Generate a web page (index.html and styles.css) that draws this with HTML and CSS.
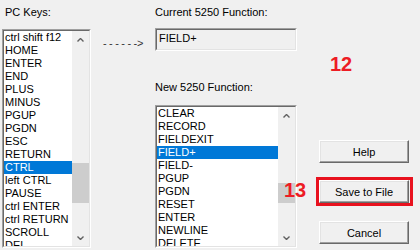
FILE: index.html
```html
<!DOCTYPE html>
<html lang="en">
<head>
    <meta charset="UTF-8">
    <meta name="viewport" content="width=device-width, initial-scale=1.0">
    <title>Keyboard Mapping</title>
    <link rel="stylesheet" href="styles.css">
</head>
<body>
    <div class="dialog">
        <div class="keys">
            <div class="label">PC Keys:</div>
            <div class="listbox keys-list">
                <div class="listbox-inner">
                    <ul class="items">
                        <li>ctrl shift f12</li>
                        <li>HOME</li>
                        <li>ENTER</li>
                        <li>END</li>
                        <li>PLUS</li>
                        <li>MINUS</li>
                        <li>PGUP</li>
                        <li>PGDN</li>
                        <li>ESC</li>
                        <li>RETURN</li>
                        <li class="selected">CTRL</li>
                        <li>left CTRL</li>
                        <li>PAUSE</li>
                        <li>ctrl ENTER</li>
                        <li>ctrl RETURN</li>
                        <li>SCROLL</li>
                        <li>DEL</li>
                    </ul>
                    <div class="scrollbar">
                        <div class="scroll-btn"><svg width="7" height="4" viewBox="0 0 7 4"><polyline points="0.5,3.5 3.5,0.5 6.5,3.5" fill="none" stroke="#606060" stroke-width="1.4"/></svg></div>
                        <div class="track"><div class="thumb keys-thumb"></div></div>
                        <div class="scroll-btn"><svg width="7" height="4" viewBox="0 0 7 4"><polyline points="0.5,0.5 3.5,3.5 6.5,0.5" fill="none" stroke="#606060" stroke-width="1.4"/></svg></div>
                    </div>
                </div>
            </div>
        </div>

        <div class="arrow">- - - - - -&gt;</div>

        <div class="functions">
            <div class="label">Current 5250 Function:</div>
            <div class="textbox">
                <div class="textbox-inner">FIELD+</div>
            </div>
            <div class="label new-label">New 5250 Function:</div>
            <div class="listbox fn-list">
                <div class="listbox-inner">
                    <ul class="items">
                        <li>CLEAR</li>
                        <li>RECORD</li>
                        <li>FIELDEXIT</li>
                        <li class="selected">FIELD+</li>
                        <li>FIELD-</li>
                        <li>PGUP</li>
                        <li>PGDN</li>
                        <li>RESET</li>
                        <li>ENTER</li>
                        <li>NEWLINE</li>
                        <li>DELETE</li>
                    </ul>
                    <div class="scrollbar">
                        <div class="scroll-btn"><svg width="7" height="4" viewBox="0 0 7 4"><polyline points="0.5,3.5 3.5,0.5 6.5,3.5" fill="none" stroke="#606060" stroke-width="1.4"/></svg></div>
                        <div class="track"><div class="thumb fn-thumb"></div></div>
                        <div class="scroll-btn"><svg width="7" height="4" viewBox="0 0 7 4"><polyline points="0.5,0.5 3.5,3.5 6.5,0.5" fill="none" stroke="#606060" stroke-width="1.4"/></svg></div>
                    </div>
                </div>
            </div>
        </div>

        <div class="buttons">
            <button class="btn help">Help</button>
            <div class="marked">
                <button class="btn">Save to File</button>
            </div>
            <button class="btn cancel">Cancel</button>
        </div>

        <span class="callout callout-12">12</span>
        <span class="callout callout-13">13</span>
    </div>
</body>
</html>
```

FILE: styles.css
```css
html, body {
    height: 250px;
    overflow: hidden;
}
body {
    margin: 0;
    background-color: #f0f0f0;
    font-family: "Liberation Sans", Arial, sans-serif;
    font-size: 11px;
    line-height: 13px;
    color: #000;
}
.dialog {
    position: relative;
    display: flex;
    height: 250px;
}
.label {
    height: 13px;
    margin-top: 6px;
    white-space: nowrap;
}
.keys {
    width: 89px;
    margin-left: 2px;
}
.keys .label {
    margin-left: 3px;
}
.listbox {
    border: 1px solid;
    border-color: #a0a0a0 #fff #fff #a0a0a0;
}
.listbox-inner {
    display: flex;
    height: 100%;
    box-sizing: border-box;
    border: 1px solid;
    border-color: #696969 #e3e3e3 #e3e3e3 #696969;
    background-color: #fff;
}
.keys-list {
    height: 217px;
    margin-top: 10px;
}
.items {
    flex: 1;
    margin: 0;
    padding: 0;
    list-style: none;
    overflow: hidden;
}
.items li {
    height: 13px;
    padding-left: 1px;
    white-space: nowrap;
}
.items .selected {
    background-color: #0078d7;
    color: #fff;
}
.scrollbar {
    width: 17px;
    display: flex;
    flex-direction: column;
    background-color: #f0f0f0;
}
.scroll-btn {
    height: 17px;
    display: flex;
    align-items: center;
    justify-content: center;
}
.track {
    flex: 1;
}
.thumb {
    background-color: #cdcdcd;
}
.keys-thumb {
    margin-top: 115px;
    height: 40px;
}
.fn-thumb {
    margin-top: 59px;
    height: 20px;
}
.arrow {
    width: 52px;
    padding: 37px 0 0 12px;
    white-space: nowrap;
    letter-spacing: -0.3px;
    color: #333;
}
.functions {
    width: 142px;
}
.textbox {
    height: 21px;
    margin-top: 9px;
    border: 1px solid;
    border-color: #a0a0a0 #fff #fff #a0a0a0;
}
.textbox-inner {
    height: 100%;
    box-sizing: border-box;
    padding: 2px 0 0 2px;
    border: 1px solid;
    border-color: #696969 #e3e3e3 #e3e3e3 #696969;
}
.new-label {
    margin-top: 30px;
}
.fn-list {
    height: 141px;
    margin-top: 11px;
}
.buttons {
    display: flex;
    flex-direction: column;
    margin-left: 22px;
    padding-top: 140px;
}
.btn {
    width: 90px;
    height: 23px;
    padding: 0;
    font-family: "Liberation Sans", Arial, sans-serif;
    font-size: 11px;
    font-weight: normal;
    color: #000;
    background-color: #f0f0f0;
    border: 1px solid;
    border-color: #fff #696969 #696969 #fff;
    box-shadow: inset -1px -1px #a0a0a0, inset 1px 1px #e3e3e3;
}
.marked {
    position: relative;
    margin-top: 17px;
}
.marked::after {
    content: "";
    position: absolute;
    top: -3px;
    left: -3px;
    width: 91px;
    height: 23px;
    border: 3px solid #e8111e;
}
.cancel {
    margin-top: 18px;
}
.callout {
    position: absolute;
    font-size: 20px;
    line-height: 20px;
    font-weight: bold;
    color: #ed1c24;
}
.callout-12 {
    left: 330px;
    top: 54px;
}
.callout-13 {
    left: 284px;
    top: 180px;
}
```
